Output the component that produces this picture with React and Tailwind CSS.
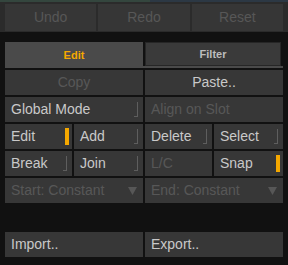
import React from "react";

const Bracket = () => (
  <div className="w-[4px] h-[15px] border-r border-b border-[#5e5e5e]" />
);

const OnBar = () => <div className="w-[4px] h-[17px] bg-[#f5a800]" />;

const Cell = ({ label, disabled, center, toggle, className = "", children }) => (
  <div
    className={`h-[25px] bg-[#373737] flex items-center ${
      center ? "justify-center" : "justify-between pl-[6px]"
    } ${disabled ? "text-[#575757]" : "text-[#c9c9c9]"} ${className}`}
  >
    <span>{label}</span>
    {toggle === "off" && (
      <div className="mr-[5px]">
        <Bracket />
      </div>
    )}
    {toggle === "on" && (
      <div className="mr-[3px]">
        <OnBar />
      </div>
    )}
    {children}
  </div>
);

const Split = ({ left, right }) => (
  <div className="flex gap-[2px]">
    <div className="w-[67px]">{left}</div>
    <div className="flex-1">{right}</div>
  </div>
);

const Arrow = () => (
  <svg width="9" height="8" viewBox="0 0 9 8" className="mr-[6px]">
    <path d="M0 0 H9 L4.5 8 Z" fill="#575757" />
  </svg>
);

const App = () => {
  return (
    <div
      className="w-[288px] h-[265px] bg-[#111111] text-[14px] overflow-hidden"
      style={{ fontFamily: '"Liberation Sans", Arial, sans-serif' }}
    >
      <div className="h-[32px] bg-[#2b2b2b]">
        <div className="flex h-[2px]">
          <div className="w-[150px] bg-[#34463e]" />
          <div className="flex-1 bg-[#2c3844]" />
        </div>
        <div className="flex gap-[2px] px-[5px] mt-[2px]">
          {["Undo", "Redo", "Reset"].map((t) => (
            <div
              key={t}
              className="flex-1 h-[27px] bg-[#363636] flex items-center justify-center text-[#575757]"
            >
              {t}
            </div>
          ))}
        </div>
      </div>

      <div className="px-[5px] mt-[10px]">
        <div className="flex h-[26px]">
          <div className="w-[138px] bg-[#4a4a4a] flex items-center justify-center text-[11px] font-bold text-[#f5a800]">
            Edit
          </div>
          <div className="flex-1 flex flex-col">
            <div className="h-[24px] ml-[2px] mr-[2px] bg-[#3a3a3a] border border-[#262626] flex items-center justify-center text-[11px] font-bold text-[#bdbdbd]">
              Filter
            </div>
            <div className="h-[2px] bg-[#4a4a4a]" />
          </div>
        </div>

        <div className="grid grid-cols-2 gap-[2px] mt-[2px]">
          <div className="flex flex-col gap-[2px]">
            <Cell label="Copy" center disabled />
            <Cell label="Global Mode" toggle="off" />
            <Split
              left={<Cell label="Edit" toggle="on" />}
              right={<Cell label="Add" toggle="off" />}
            />
            <Split
              left={<Cell label="Break" toggle="off" />}
              right={<Cell label="Join" toggle="off" />}
            />
            <Cell label="Start: Constant" disabled>
              <Arrow />
            </Cell>
          </div>
          <div className="flex flex-col gap-[2px]">
            <Cell label="Paste.." center />
            <Cell label="Align on Slot" disabled />
            <Split
              left={<Cell label="Delete" toggle="off" />}
              right={<Cell label="Select" toggle="off" />}
            />
            <Split
              left={<Cell label="L/C" disabled />}
              right={<Cell label="Snap" toggle="on" />}
            />
            <Cell label="End: Constant" disabled>
              <Arrow />
            </Cell>
          </div>
        </div>

        <div className="grid grid-cols-2 gap-[2px] mt-[29px]">
          <Cell label="Import.." />
          <Cell label="Export.." />
        </div>
      </div>
    </div>
  );
};

export default App;
